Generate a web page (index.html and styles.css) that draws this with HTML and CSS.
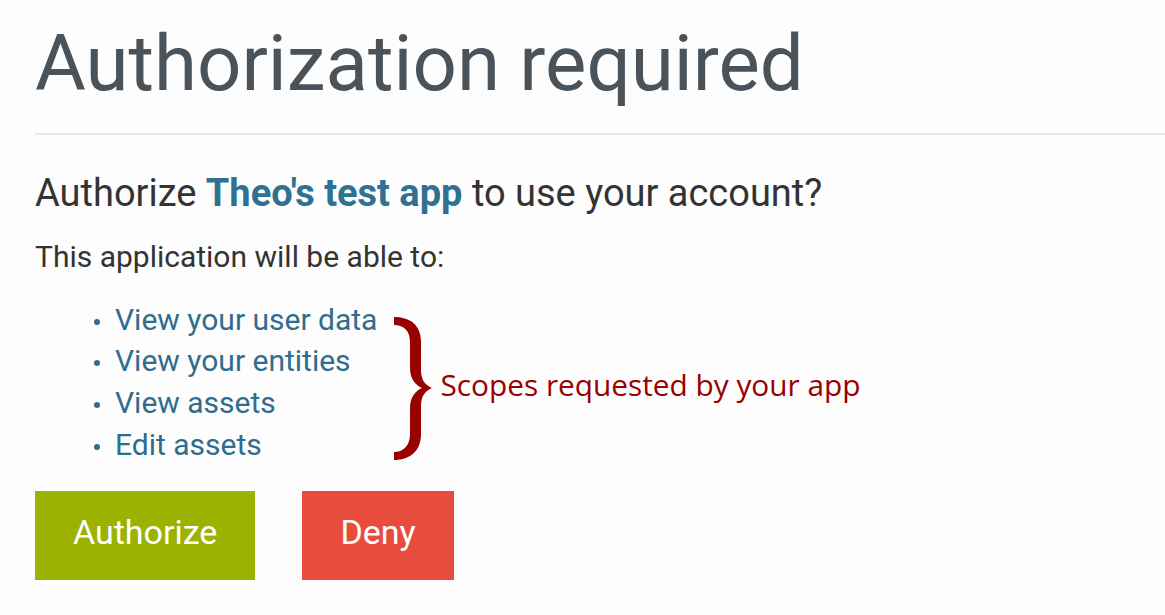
FILE: index.html
```html
<!DOCTYPE html>
<html>
<head>
<meta charset="utf-8">
<title>Authorization required</title>
<link rel="stylesheet" href="styles.css">
</head>
<body>
<main class="page">
  <h1 class="title">Authorization required</h1>
  <div class="divider"></div>
  <h2 class="question">Authorize <strong class="app-name">Theo's test app</strong> to use your account?</h2>
  <p class="intro">This application will be able to:</p>
  <div class="scopes-row">
    <ul class="scopes">
      <li>View your user data</li>
      <li>View your entities</li>
      <li>View assets</li>
      <li>Edit assets</li>
    </ul>
    <svg class="brace" width="45" height="152" viewBox="0 0 45 152" aria-hidden="true">
      <path d="M3 5 C18 5 30 12 30 30 L30 58 C30 68 34 73 41 76 C34 79 30 84 30 94 L30 122 C30 140 18 148 3 148 L3 140 C12 140 19 134 19 122 L19 96 C19 86 24 79 31 76 C24 73 19 66 19 56 L19 30 C19 18 12 13 3 13 Z" fill="#990000"/>
    </svg>
    <span class="scopes-note">Scopes requested by your app</span>
  </div>
  <div class="actions">
    <button class="btn btn-authorize" type="button">Authorize</button>
    <button class="btn btn-deny" type="button">Deny</button>
  </div>
</main>
</body>
</html>
```
FILE: styles.css
```css
html, body {
  margin: 0;
  padding: 0;
  background: #fcfdfc;
}

body {
  font-family: Roboto, "Liberation Sans", sans-serif;
  color: #333333;
}

.page {
  padding: 18px 0 0 35px;
}

.title {
  margin: 0;
  font-size: 78px;
  font-weight: 400;
  line-height: 92px;
  color: #4a525a;
}

.divider {
  margin-top: 23px;
  height: 2px;
  background: #e9eae8;
}

.question {
  margin: 36px 0 0;
  font-size: 38px;
  font-weight: 400;
  line-height: 44.5px;
  color: #333333;
}

.app-name {
  font-weight: 700;
  color: #2e7192;
}

.intro {
  margin: 23px 0 0;
  font-size: 30px;
  line-height: 35px;
  color: #333333;
}

.scopes-row {
  display: flex;
  align-items: flex-start;
  margin-top: 25px;
}

.scopes {
  margin: 0;
  padding: 0 0 0 80px;
  list-style: none;
  font-size: 30px;
  line-height: 41.7px;
  color: #2f6d8e;
}

.scopes li::before {
  content: "";
  display: inline-block;
  width: 6px;
  height: 6px;
  border-radius: 50%;
  background: currentColor;
  margin-left: -21px;
  margin-right: 15px;
  vertical-align: middle;
}

.brace {
  flex: none;
  margin: 13px 0 0 14px;
}

.scopes-note {
  margin: 66px 0 0 4px;
  font-family: "Open Sans", "Noto Sans", sans-serif;
  font-size: 29.8px;
  line-height: 40px;
  color: #990000;
}

.actions {
  display: flex;
  gap: 47px;
  margin-top: 26px;
}

.btn {
  box-sizing: border-box;
  border: 0;
  border-radius: 0;
  margin: 0;
  height: 89px;
  padding: 24px 38px 31px;
  font-family: Roboto, "Liberation Sans", sans-serif;
  font-size: 34px;
  line-height: 34px;
  color: #ffffff;
  cursor: pointer;
}

.btn-authorize {
  background: #9bb200;
}

.btn-deny {
  background: #e74c3c;
}
```
